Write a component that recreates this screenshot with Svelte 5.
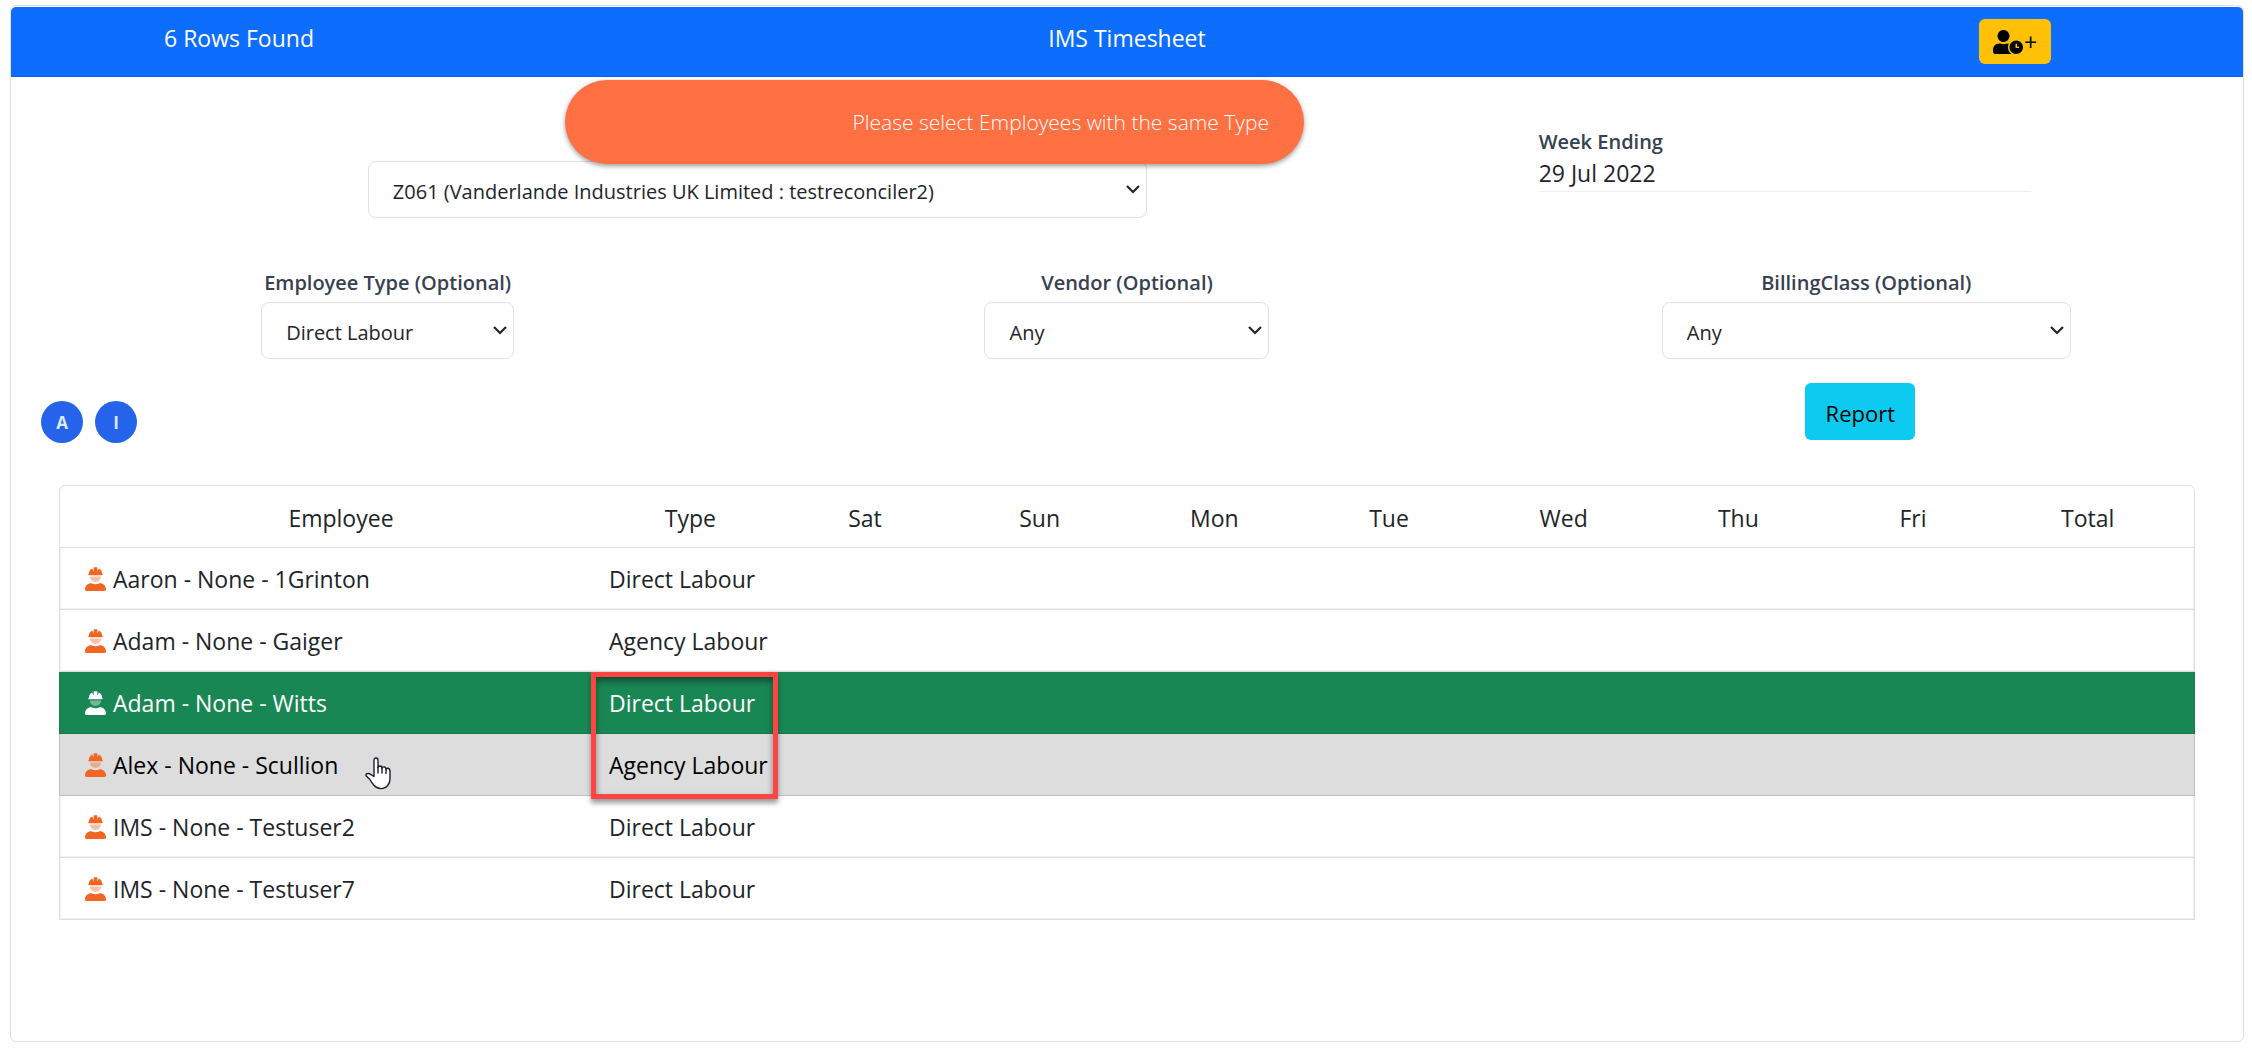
<script lang="ts">
  type Employee = { name: string; type: string };

  const days = ['Sat', 'Sun', 'Mon', 'Tue', 'Wed', 'Thu', 'Fri'];

  const employees: Employee[] = [
    { name: 'Aaron - None - 1Grinton', type: 'Direct Labour' },
    { name: 'Adam - None - Gaiger', type: 'Agency Labour' },
    { name: 'Adam - None - Witts', type: 'Direct Labour' },
    { name: 'Alex - None - Scullion', type: 'Agency Labour' },
    { name: 'IMS - None - Testuser2', type: 'Direct Labour' },
    { name: 'IMS - None - Testuser7', type: 'Direct Labour' },
  ];

  let site = $state('Z061');
  let employeeType = $state('Direct Labour');
  let vendor = $state('Any');
  let billingClass = $state('Any');
  let selected = $state(2);
  let hovered = $state(3);
</script>

<main class="card">
  <header class="card-header">
    <span>{employees.length} Rows Found</span>
    <span>IMS Timesheet</span>
    <button class="add-btn" aria-label="Add employee time">
      <svg class="user-clock" viewBox="0 0 640 512" aria-hidden="true">
        <path
          d="M496 224c-79.6 0-144 64.4-144 144s64.4 144 144 144 144-64.4 144-144-64.4-144-144-144zm64 150.3c0 5.3-4.4 9.7-9.7 9.7h-60.6c-5.3 0-9.7-4.4-9.7-9.7v-76.6c0-5.3 4.4-9.7 9.7-9.7h12.6c5.3 0 9.7 4.4 9.7 9.7V352h38.3c5.3 0 9.7 4.4 9.7 9.7v12.6zM320 368c0-27.8 6.7-54.1 18.2-77.5-8-1.5-16.2-2.5-24.6-2.5h-16.7c-22.2 10.2-46.9 16-72.9 16s-50.6-5.8-72.9-16h-16.7C60.2 288 0 348.2 0 422.4V464c0 26.5 21.5 48 48 48h347.1c-45.3-31.9-75.1-84.5-75.1-144zm-96-112c70.7 0 128-57.3 128-128S294.7 0 224 0 96 57.3 96 128s57.3 128 128 128z"
        />
      </svg>
      <span>+</span>
    </button>
  </header>

  <div class="toast" role="alert">Please select Employees with the same Type</div>

  <div class="card-body">
    <div class="site-row">
      <select class="site-select" aria-label="Site" bind:value={site}>
        <option value="Z061">Z061 (Vanderlande Industries UK Limited : testreconciler2)</option>
      </select>
      <div class="week">
        <div class="label">Week Ending</div>
        <div class="week-date">29 Jul 2022</div>
      </div>
    </div>

    <div class="filters">
      <div class="field">
        <label class="label" for="employee-type">Employee Type (Optional)</label>
        <select id="employee-type" class="type-select" bind:value={employeeType}>
          <option>Any</option>
          <option>Direct Labour</option>
          <option>Agency Labour</option>
        </select>
      </div>
      <div class="field">
        <label class="label" for="vendor">Vendor (Optional)</label>
        <select id="vendor" class="vendor-select" bind:value={vendor}>
          <option>Any</option>
        </select>
      </div>
      <div class="field">
        <label class="label" for="billing-class">BillingClass (Optional)</label>
        <select id="billing-class" class="billing-select" bind:value={billingClass}>
          <option>Any</option>
        </select>
      </div>
    </div>

    <div class="actions">
      <div class="initials">
        <button class="initial-btn">A</button>
        <button class="initial-btn">I</button>
      </div>
      <button class="report-btn">Report</button>
    </div>

    <table class="timesheet">
      <thead>
        <tr>
          <th>Employee</th>
          <th>Type</th>
          {#each days as day}
            <th>{day}</th>
          {/each}
          <th>Total</th>
        </tr>
      </thead>
      <tbody>
        {#each employees as employee, i}
          <tr
            class:selected={i === selected}
            class:hovered={i === hovered}
            onclick={() => (selected = i)}
            onmouseenter={() => (hovered = i)}
          >
            <td class="name">
              <svg class="worker" viewBox="0 0 21 24" aria-hidden="true">
                <path
                  d="M4 8.200 C3.400 8.200 3.200 7.900 3.200 7.300 C3.700 7.200 3.900 7 3.900 6.500 C4 4.200 5.300 2.400 7.200 1.500 L8.600 4.600 V.8 Q8.600 .2 9.200 .2 H11.800 Q12.400 .2 12.400 .8 V4.600 L13.800 1.500 C15.700 2.400 17 4.200 17.100 6.500 C17.100 7 17.300 7.200 17.800 7.300 C17.800 7.900 17.600 8.200 17 8.200 Z"
                />
                <path class="face" d="M5 9.600 H16 C16 12.800 13.600 15 10.500 15 C7.400 15 5 12.800 5 9.600 Z" />
                <path
                  d="M6.300 16.300 C7.600 16.900 9 17.200 10.500 17.200 C12 17.200 13.400 16.900 14.700 16.300 C18.300 16.300 21 19 21 22.400 V22.600 Q21 24 19.600 24 H1.400 Q0 24 0 22.600 V22.400 C0 19 2.700 16.300 6.300 16.300 Z"
                />
              </svg>
              {employee.name}
              {#if i === 3}
                <svg class="pointer" viewBox="0 0 26 33" aria-hidden="true">
                  <path
                    d="M9 19.500 V3.500 Q9 1 11 1 Q13 1 13 3.500 V10.500 Q13.400 9 15 9 Q17 9.200 17 11.200 Q17.500 9.800 19 9.900 Q21 10.200 21 12.300 Q21.600 11.100 23 11.300 Q25 11.700 25 14.500 V22 Q25 25.500 22.800 28.200 Q20.600 31.600 16 31.600 Q12 31.600 9.200 28.500 Q6.500 25.400 4.500 22 L1.300 18.900 Q.5 17.300 2 16.700 Q4.200 16.200 6 17.700 Z"
                  />
                  <path d="M13 10.500 V16 M17 11.200 V16 M21 12.300 V16.500" />
                </svg>
              {/if}
            </td>
            <td class="type">
              {employee.type}
              {#if i === 2}
                <span class="highlight"></span>
              {/if}
            </td>
            {#each days as _}
              <td></td>
            {/each}
            <td></td>
          </tr>
        {/each}
      </tbody>
    </table>
  </div>
</main>

<style>
  :global(body) {
    margin: 0;
    background: #fefefe;
  }

  .card {
    position: relative;
    margin: 5px 8px 6px 10px;
    padding-top: 1px;
    border: 1px solid #dfdfdf;
    border-radius: 6px;
    background: #fff;
    color: #212529;
    font-family: 'Open Sans', 'Noto Sans', sans-serif;
    font-size: 23px;
    line-height: 32px;
  }

  button,
  select {
    font-family: inherit;
    cursor: pointer;
  }

  .card-header {
    display: grid;
    grid-template-columns: 1fr 3fr 1fr;
    justify-items: center;
    align-items: start;
    padding: 12px 6px;
    border-bottom: 1px solid #0c63e4;
    border-radius: 5px 5px 0 0;
    background: #0d6efd;
    color: #fff;
  }

  .card-header > span {
    padding-top: 3px;
  }

  .add-btn {
    display: flex;
    align-items: center;
    gap: 1px;
    height: 45px;
    padding: 0 14px;
    border: none;
    border-radius: 6px;
    background: #ffc107;
    color: #000;
    font-size: 23px;
  }

  .user-clock {
    width: 30px;
    height: 24px;
  }

  .toast {
    position: absolute;
    top: 74px;
    left: 554px;
    z-index: 1;
    box-sizing: border-box;
    width: 739px;
    padding: 26px 35px;
    border-radius: 42px;
    background: #ff7043;
    box-shadow: 0 2px 5px rgba(0, 0, 0, 0.4);
    color: #fff;
    font-size: 21px;
    font-weight: 300;
    text-align: right;
  }

  .card-body {
    padding: 0 7px 121px;
  }

  .label {
    color: #374151;
    font-size: 20px;
    font-weight: 600;
    line-height: 30px;
  }

  select {
    appearance: none;
    box-sizing: border-box;
    max-width: 100%;
    height: 57px;
    padding: 4px 32px 0 24px;
    border: 1px solid #dee2e6;
    border-radius: 8px;
    background: #fff
      url("data:image/svg+xml,%3Csvg xmlns='http://www.w3.org/2000/svg' width='14' height='9' viewBox='0 0 14 9'%3E%3Cpath d='M1 1l6 6 6-6' fill='none' stroke='%23212529' stroke-width='2.200'/%3E%3C/svg%3E")
      no-repeat right 6px center;
    color: #212529;
    font-size: 20px;
  }

  .site-select {
    width: 779px;
    margin-top: 84px;
  }

  .type-select {
    width: 253px;
  }

  .vendor-select {
    width: 285px;
  }

  .billing-select {
    width: 409px;
  }

  .site-row {
    display: grid;
    grid-template-columns: 2fr 1fr;
    align-items: start;
    justify-items: center;
    margin-bottom: 50px;
  }

  .week {
    justify-self: start;
    width: 492px;
    margin: 50px 0 0 42px;
    border-bottom: 1px solid #f0f0f0;
  }

  .week-date {
    padding-bottom: 2px;
  }

  .filters {
    display: grid;
    grid-template-columns: repeat(3, 1fr);
    margin-bottom: 24px;
  }

  .field {
    display: flex;
    flex-direction: column;
    align-items: center;
    gap: 4px;
  }

  .actions {
    display: grid;
    grid-template-columns: 2fr 1fr;
    align-items: start;
    margin-bottom: 42px;
  }

  .initials {
    display: flex;
    gap: 12px;
    padding: 18px 0 0 23px;
  }

  .initial-btn {
    width: 42px;
    height: 42px;
    padding: 0;
    border: none;
    border-radius: 50%;
    background: #2563eb;
    color: #dbeafe;
    font-size: 17px;
    font-weight: 700;
  }

  .report-btn {
    justify-self: center;
    width: 110px;
    height: 57px;
    margin-right: 12px;
    padding: 2px 0 0;
    border: none;
    border-radius: 6px;
    background: #0dcaf0;
    color: #000;
    font-size: 22px;
  }

  .timesheet {
    display: block;
    margin: 0 41px;
  }

  thead,
  tbody {
    display: block;
  }

  tr {
    display: grid;
    grid-template-columns: 3fr repeat(9, 1fr);
    align-items: center;
    box-sizing: border-box;
    height: 62px;
    padding: 0 19px;
    border: 1px solid #dfdfdf;
    border-top: none;
  }

  thead tr {
    height: 63px;
    border-top: 1px solid #dfdfdf;
    border-radius: 6px 6px 0 0;
  }

  tbody tr {
    box-shadow: inset -1px -1px #f0f0f0, inset 1px 0 #f0f0f0;
    cursor: pointer;
  }

  tbody tr.hovered {
    border-color: #bfbfbf;
    background: #ddd;
    box-shadow: none;
    color: #000;
  }

  tbody tr.selected {
    border-color: #177a4b;
    background: #198754;
    box-shadow: none;
    color: #fff;
  }

  th {
    padding: 3px 0 0;
    font-weight: 400;
    text-align: center;
  }

  td {
    position: relative;
    padding: 1px 6px 0;
    white-space: nowrap;
  }

  .name {
    display: flex;
    align-items: center;
    gap: 7px;
  }

  .worker {
    width: 21px;
    height: 24px;
    fill: #f26522;
  }

  .selected .worker {
    fill: #fff;
  }

  .face {
    opacity: 0.4;
  }

  .pointer {
    position: absolute;
    top: 9px;
    left: 286px;
    width: 26px;
    height: 33px;
    fill: #fff;
    stroke: #1b1b2b;
    stroke-width: 1.4;
    stroke-linejoin: round;
    stroke-linecap: round;
  }

  /* Red frame round the two mismatched types */
  .highlight {
    position: absolute;
    top: -14px;
    right: 0;
    left: -12px;
    z-index: 1;
    box-sizing: border-box;
    height: 127px;
    border: 5px solid #ff4444;
    box-shadow: 0 4px 5px rgba(0, 0, 0, 0.4), inset 0 4px 6px rgba(0, 0, 0, 0.45);
    pointer-events: none;
  }
</style>
